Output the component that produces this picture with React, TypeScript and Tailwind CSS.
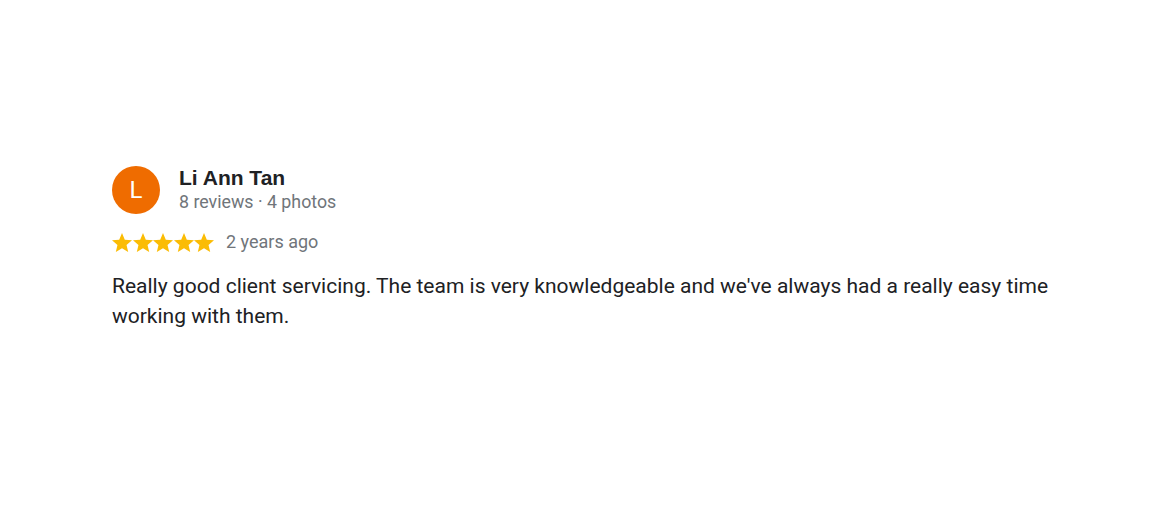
export default function App() {
  const stars = [0, 1, 2, 3, 4]

  return (
    <div className="w-[1161px] h-[520px] bg-white px-[112px] pt-[166px] font-['Roboto',sans-serif]">
      <div className="flex items-center gap-[19px]">
        <div className="w-12 h-12 rounded-full bg-[#ef6c00] flex items-center justify-center text-white text-[24px] leading-none">
          L
        </div>
        <div className="flex flex-col">
          <div className="text-[21px] leading-6 font-bold text-[#202124] font-['Liberation_Sans',Arial,sans-serif]">
            Li Ann Tan
          </div>
          <div className="text-[17.8px] leading-6 text-[#70757a]">8 reviews · 4 photos</div>
        </div>
      </div>

      <div className="flex items-center mt-[16px]">
        <div className="flex gap-[0.5px]">
          {stars.map((i) => (
            <svg key={i} className="w-[20px] h-[19px]" viewBox="2 2 20 19" fill="#fbbc04">
              <path d="M12 17.27L18.18 21l-1.64-7.03L22 9.24l-7.19-.61L12 2 9.19 8.63 2 9.24l5.46 4.73L5.82 21z" />
            </svg>
          ))}
        </div>
        <span className="ml-[12px] text-[18px] leading-6 text-[#70757a]">2 years ago</span>
      </div>

      <p className="mt-[17px] text-[21px] leading-[30px] text-[#202124]">
        Really good client servicing. The team is very knowledgeable and we've always had a really easy time
        working with them.
      </p>
    </div>
  )
}
